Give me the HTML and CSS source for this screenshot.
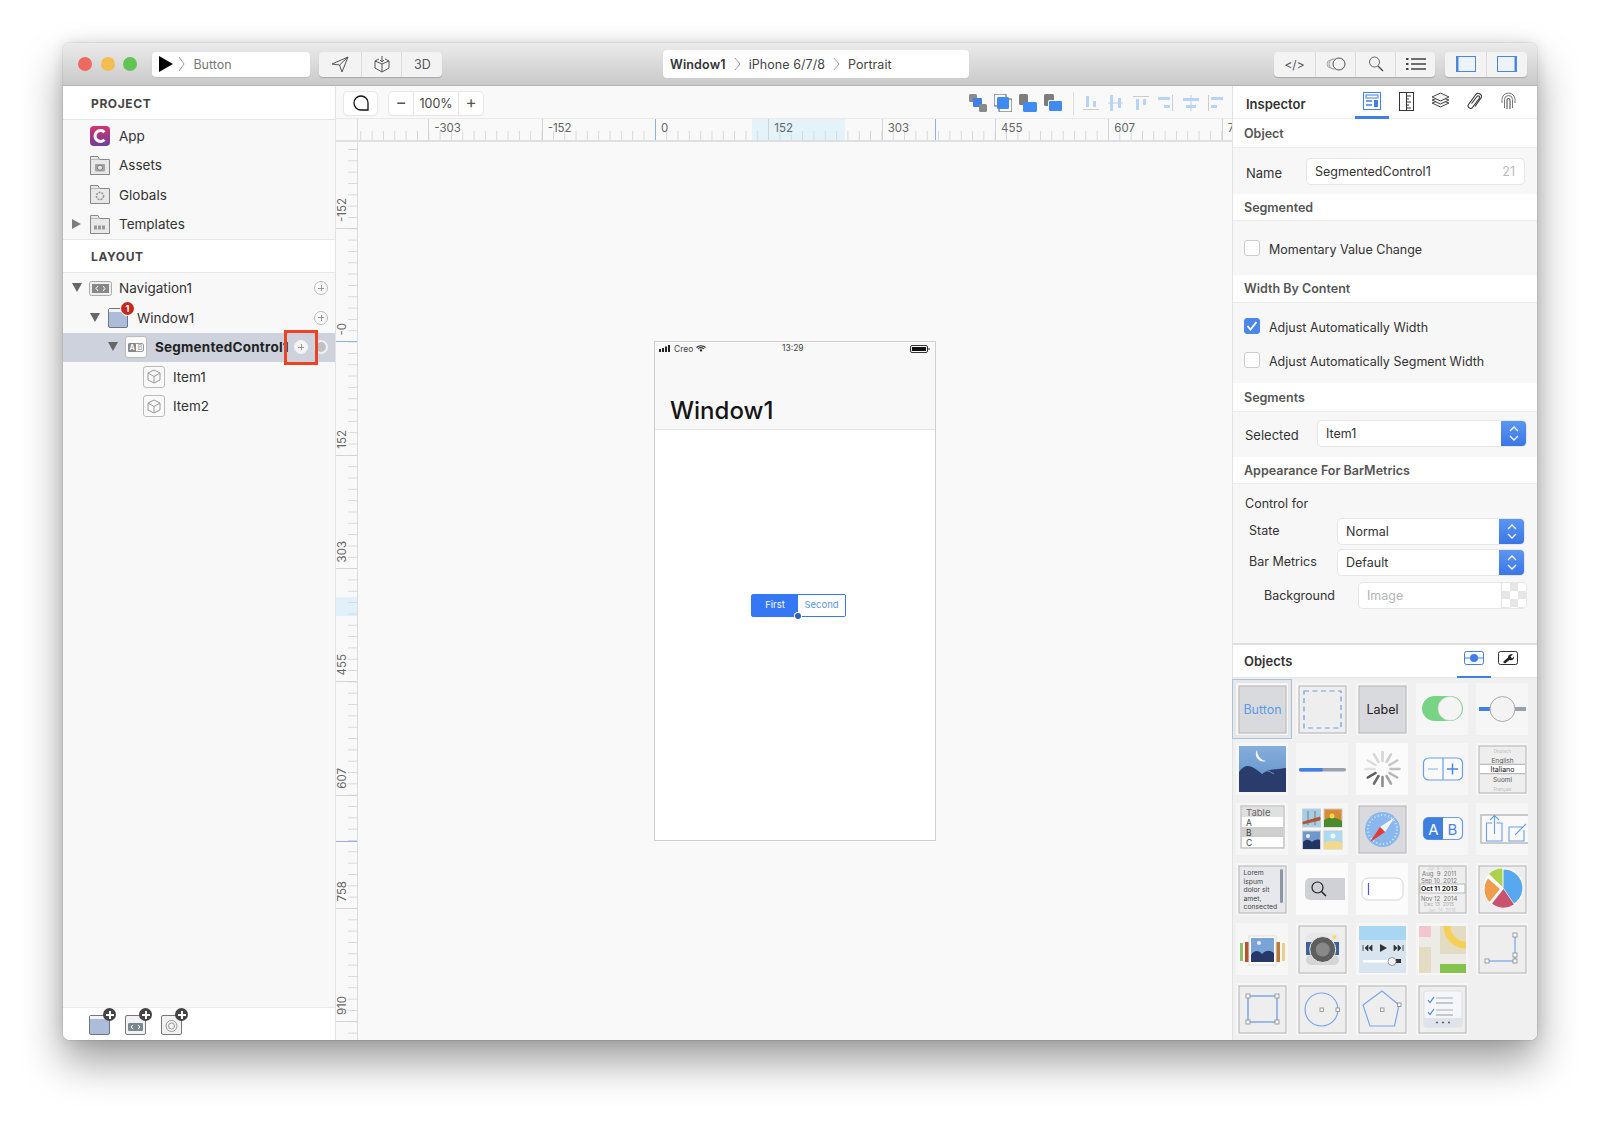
FILE: index.html
```html
<!DOCTYPE html>
<html lang="en">
<head>
<meta charset="utf-8">
<title>Creo</title>
<link rel="stylesheet" href="styles.css">
</head>
<body>
<div class="window">
  <header class="titlebar">
    <div class="tb-left">
      <div class="lights"><i class="light red"></i><i class="light yellow"></i><i class="light green"></i></div>
      <div class="scheme">
        <svg width="14" height="16" viewBox="0 0 14 16"><path d="M0 0L14 8L0 16Z" fill="#000"/></svg>
        <svg class="chev" width="7" height="16" viewBox="0 0 7 16"><path d="M1 1L6 8L1 15" fill="none" stroke="#999"/></svg>
        <span>Button</span>
      </div>
      <div class="btn-group send-group">
        <div class="seg w42"><svg width="18" height="17" viewBox="0 0 18 17"><path d="M1 8L17 1L11 16L8.5 9ZM8.5 9L17 1" fill="none" stroke="#555"/></svg></div>
        <div class="seg w40"><svg width="18" height="18" viewBox="0 0 18 18"><path d="M6 4L2 6L9 9L16 6L12 4M2 6V13L9 17L16 13V6M9 9V17M9 1V7M7 5L9 7L11 5" fill="none" stroke="#555"/></svg></div>
        <div class="seg w41 t3d">3D</div>
      </div>
    </div>
    <div class="crumbs">
      <b>Window1</b>
      <svg width="7" height="14" viewBox="0 0 7 14"><path d="M1 1L6 7L1 13" fill="none" stroke="#999"/></svg>
      <span>iPhone 6/7/8</span>
      <svg width="7" height="14" viewBox="0 0 7 14"><path d="M1 1L6 7L1 13" fill="none" stroke="#999"/></svg>
      <span>Portrait</span>
    </div>
    <div class="tb-right">
      <div class="btn-group">
        <div class="seg w41 code">&lt;/&gt;</div>
        <div class="seg w40"><svg width="20" height="14" viewBox="0 0 20 14"><circle cx="5" cy="7" r="4" fill="none" stroke="#aaa"/><circle cx="8" cy="7" r="5" fill="#eee" stroke="#999"/><circle cx="13" cy="7" r="6" fill="#f4f4f4" stroke="#555"/></svg></div>
        <div class="seg w40"><svg width="16" height="16" viewBox="0 0 16 16"><circle cx="6.5" cy="6" r="5" fill="none" stroke="#666"/><path d="M10 10L15 15" stroke="#444" stroke-width="1.2"/></svg></div>
        <div class="seg w40"><svg width="20" height="14" viewBox="0 0 20 14"><path d="M5 2H20M5 7H20M5 12H20" stroke="#444" stroke-width="1.4"/><path d="M0 2H2.5M0 7H2.5M0 12H2.5" stroke="#444" stroke-width="1.8"/></svg></div>
      </div>
      <div class="btn-group panels">
        <div class="seg w41"><svg width="20" height="16" viewBox="0 0 20 16"><rect x=".5" y=".5" width="19" height="15" fill="#eef2f9" stroke="#4a86e8"/><rect x="0" y="0" width="2.500" height="16" fill="#4a86e8"/></svg></div>
        <div class="seg w41"><svg width="20" height="16" viewBox="0 0 20 16"><rect x=".5" y=".5" width="19" height="15" fill="#eef2f9" stroke="#4a86e8"/><rect x="17.500" y="0" width="2.500" height="16" fill="#4a86e8"/></svg></div>
      </div>
    </div>
  </header>

  <div class="main">
    <aside class="sidebar">
      <div class="side-head">PROJECT</div>
      <div class="tree tree-project">
        <div class="row lvl0"><i class="tri-none"></i>
          <span class="ico"><svg width="20" height="20" viewBox="0 0 20 20"><defs><linearGradient id="app" x1="0" y1="0" x2="0" y2="1"><stop offset="0" stop-color="#d6336f"/><stop offset="1" stop-color="#6c3f9c"/></linearGradient></defs><rect width="20" height="20" rx="4" fill="url(#app)"/><path d="M14.5 6.2A5.5 5.5 0 1 0 14.5 13.8" fill="none" stroke="#fff" stroke-width="3"/></svg></span>
          <span class="name">App</span></div>
        <div class="row lvl0"><i class="tri-none"></i>
          <span class="ico"><svg width="20" height="19" viewBox="0 0 20 19"><path d="M.5 18.500V.5H8L9.500 3.500H19.500V18.500Z" fill="#e8e8e8" stroke="#888"/><path d="M1 3.500H9.500" stroke="#bbb"/><rect x="5" y="8" width="10" height="7.500" rx="1" fill="#a5a5a5"/><circle cx="10" cy="11.700" r="2.600" fill="#e6e6e6" stroke="#777"/></svg></span>
          <span class="name">Assets</span></div>
        <div class="row lvl0"><i class="tri-none"></i>
          <span class="ico"><svg width="20" height="19" viewBox="0 0 20 19"><path d="M.5 18.500V.5H8L9.500 3.500H19.500V18.500Z" fill="#e8e8e8" stroke="#888"/><path d="M1 3.500H9.500" stroke="#bbb"/><circle cx="10" cy="11" r="3.600" fill="none" stroke="#999" stroke-width="1.600" stroke-dasharray="2 1"/></svg></span>
          <span class="name">Globals</span></div>
        <div class="row lvl0"><i class="tri-right"></i>
          <span class="ico"><svg width="20" height="19" viewBox="0 0 20 19"><path d="M.5 18.500V.5H8L9.500 3.500H19.500V18.500Z" fill="#e8e8e8" stroke="#888"/><path d="M1 3.500H9.500" stroke="#bbb"/><path d="M4 12.500H16" stroke="#999" stroke-width="4" stroke-dasharray="3 1"/></svg></span>
          <span class="name">Templates</span></div>
      </div>
      <div class="side-head second">LAYOUT</div>
      <div class="tree tree-layout">
        <div class="row lvl0"><i class="tri-down"></i>
          <span class="ico"><svg width="23" height="15" viewBox="0 0 23 15"><rect x=".5" y=".5" width="22" height="14" rx="2" fill="#eee" stroke="#aaa"/><rect x="3" y="3" width="17" height="9" fill="#888"/><path d="M9 5L7 7.5L9 10M14 5L16 7.5L14 10" fill="none" stroke="#fff"/></svg></span>
          <span class="name">Navigation1</span><i class="plus"></i></div>
        <div class="row lvl1"><i class="tri-down"></i>
          <span class="ico win-ico"><svg width="20" height="20" viewBox="0 0 20 20"><rect x=".5" y=".5" width="19" height="19" rx="1.5" fill="#adbcd9" stroke="#6d7686"/><path d="M1 1H19V4H1Z" fill="#f4f4f4"/></svg><i class="badge">1</i></span>
          <span class="name">Window1</span><i class="plus"></i></div>
        <div class="row lvl2 selected"><i class="tri-down"></i>
          <span class="ico"><span class="tile"><svg width="16" height="9" viewBox="0 0 16 9"><rect x=".5" y=".5" width="15" height="8" rx="1.5" fill="#fff" stroke="#999"/><rect x="0" y="0" width="8" height="9" rx="1.5" fill="#888"/><text x="4" y="7.4" class="tile-a">A</text><text x="12" y="7.4" class="tile-b">B</text></svg></span></span>
          <span class="name strong">SegmentedControl1</span>
          <i class="plus filled"></i><i class="radio"></i>
          <i class="callout"></i></div>
        <div class="row lvl3"><i class="tri-none"></i>
          <span class="ico"><span class="tile"><svg width="14" height="15" viewBox="0 0 14 15"><path d="M7 1L13 4V11L7 14L1 11V4ZM1 4L7 7.5L13 4M7 7.5V14" fill="none" stroke="#999"/></svg></span></span>
          <span class="name">Item1</span></div>
        <div class="row lvl3"><i class="tri-none"></i>
          <span class="ico"><span class="tile"><svg width="14" height="15" viewBox="0 0 14 15"><path d="M7 1L13 4V11L7 14L1 11V4ZM1 4L7 7.5L13 4M7 7.5V14" fill="none" stroke="#999"/></svg></span></span>
          <span class="name">Item2</span></div>
      </div>
      <div class="side-foot">
        <span class="add"><svg width="21" height="20" viewBox="0 0 21 20"><rect x=".5" y=".5" width="20" height="19" rx="1.5" fill="#adbcd9" stroke="#6d7686"/><path d="M1 1H20V4H1Z" fill="#f4f4f4"/></svg><i class="addmark"></i></span>
        <span class="add"><svg width="21" height="20" viewBox="0 0 21 20"><rect x=".5" y=".5" width="20" height="19" rx="1.5" fill="#f2f2f2" stroke="#777"/><rect x="3" y="8" width="15" height="8" rx="1" fill="#7c8794"/><path d="M8 10L6 12L8 14M13 10L15 12L13 14" fill="none" stroke="#fff"/></svg><i class="addmark"></i></span>
        <span class="add"><svg width="21" height="20" viewBox="0 0 21 20"><rect x=".5" y=".5" width="20" height="19" rx="1.5" fill="#f2f2f2" stroke="#777"/><circle cx="10.500" cy="11" r="5.500" fill="none" stroke="#999"/><circle cx="10.500" cy="11" r="3" fill="none" stroke="#999"/></svg><i class="addmark"></i></span>
      </div>
    </aside>

    <section class="canvas">
      <div class="canvas-bar">
        <div class="tool single"><svg width="16" height="16" viewBox="0 0 16 16"><path d="M15 15H8A7 7 0 1 1 15 8Z" fill="none" stroke="#111" stroke-width="1.300"/></svg></div>
        <div class="zoom-group"><span class="z-btn">−</span><span class="z-val">100%</span><span class="z-btn">+</span></div>
        <div class="arrange">
          <svg width="18" height="18" viewBox="0 0 18 18"><rect x="0" y="0" width="8" height="8" rx="1.500" fill="#8a8a8a"/><rect x="4" y="4" width="9" height="9" rx="1" fill="#3f7fe8"/><rect x="10" y="10" width="8" height="8" rx="1.500" fill="#8a8a8a"/></svg>
          <svg width="18" height="18" viewBox="0 0 18 18"><rect x="0" y="0" width="12" height="12" rx="1.500" fill="none" stroke="#888" stroke-width="1.500"/><rect x="5" y="5" width="13" height="13" rx="1.500" fill="none" stroke="#888" stroke-width="1.500"/><rect x="3" y="3" width="12" height="12" rx="1.500" fill="#3f8bf0"/></svg>
          <svg width="18" height="18" viewBox="0 0 18 18"><rect x="0" y="0" width="9" height="11" rx="1.500" fill="#7d7d7d"/><rect x="4" y="8" width="14" height="10" rx="1.500" fill="#3f8bf0"/></svg>
          <svg width="18" height="18" viewBox="0 0 18 18"><rect x="0" y="0" width="10" height="12" rx="1.500" fill="#7d7d7d"/><rect x="4" y="6" width="14" height="12" rx="1.500" fill="#f9f9f9"/><rect x="5" y="7" width="13" height="10" rx="1" fill="#3f8bf0"/></svg>
          <i class="vsep"></i>
          <div class="aligns">
            <svg width="16" height="14" viewBox="0 0 16 14"><path d="M0 13.500H16" stroke="#ccc"/><rect x="3" y="0" width="3" height="11" fill="#b6d3fa"/><rect x="10" y="5" width="3" height="6" fill="#b6d3fa"/></svg>
            <svg width="15" height="16" viewBox="0 0 15 16"><path d="M0 8H15" stroke="#ccc"/><rect x="2" y="0" width="3" height="16" fill="#b6d3fa"/><rect x="10" y="3" width="3" height="10" fill="#b6d3fa"/></svg>
            <svg width="16" height="14" viewBox="0 0 16 14"><path d="M0 .500H16" stroke="#ccc"/><rect x="3" y="3" width="3" height="11" fill="#b6d3fa"/><rect x="10" y="3" width="3" height="6" fill="#b6d3fa"/></svg>
            <svg width="15" height="16" viewBox="0 0 15 16"><path d="M14.500 0V16" stroke="#ccc"/><rect x="0" y="2" width="12" height="3" fill="#b6d3fa"/><rect x="6" y="10" width="6" height="3" fill="#b6d3fa"/></svg>
            <svg width="16" height="16" viewBox="0 0 16 16"><path d="M8 0V16" stroke="#ccc"/><rect x="0" y="3" width="16" height="3" fill="#b6d3fa"/><rect x="3" y="10" width="10" height="3" fill="#b6d3fa"/></svg>
            <svg width="15" height="16" viewBox="0 0 15 16"><path d="M.500 0V16" stroke="#ccc"/><rect x="3" y="2" width="12" height="3" fill="#b6d3fa"/><rect x="3" y="10" width="6" height="3" fill="#b6d3fa"/></svg>
          </div>
        </div>
      </div>
      <div class="ruler-h">
        <div class="corner"></div>
        <div class="h-track">
          <i class="h-glow"></i><i class="h-edge"></i>
          <div class="h-mark lead"></div>
          <div class="h-mark">-303</div>
          <div class="h-mark">-152</div>
          <div class="h-mark blue">0</div>
          <div class="h-mark">152</div>
          <div class="h-mark">303</div>
          <div class="h-mark">455</div>
          <div class="h-mark">607</div>
          <div class="h-mark">758</div>
        </div>
      </div>
      <div class="canvas-body">
        <div class="ruler-v">
          <i class="v-glow"></i><i class="v-edge"></i>
          <div class="v-mark lead"><span>-152</span></div>
          <div class="v-mark blue"><span>-0</span></div>
          <div class="v-mark"><span>152</span></div>
          <div class="v-mark"><span>303</span></div>
          <div class="v-mark"><span>455</span></div>
          <div class="v-mark"><span>607</span></div>
          <div class="v-mark"><span>758</span></div>
          <div class="v-mark"><span>910</span></div>
        </div>
        <div class="stage">
          <div class="phone">
            <div class="nav">
              <div class="status">
                <svg width="12" height="7" viewBox="0 0 12 7"><path d="M0 4H2V7H0ZM3 3H5V7H3ZM6 1.500H8V7H6ZM9 0H11V7H9Z" fill="#222"/></svg>
                <span class="carrier">Creo</span>
                <svg width="10" height="7" viewBox="0 0 10 7"><path d="M.5 2.500A6.500 6.500 0 0 1 9.500 2.500M2 4A4 4 0 0 1 8 4" fill="none" stroke="#222" stroke-width="1.100"/><path d="M3.500 5L5 7L6.500 5A2 2 0 0 0 3.500 5Z" fill="#222"/></svg>
                <span class="clock">13:29</span>
                <svg class="batt" width="20" height="8" viewBox="0 0 20 8"><rect x=".5" y=".5" width="17" height="7" rx="1.500" fill="none" stroke="#333"/><rect x="2" y="2" width="14" height="4" fill="#111"/><rect x="18.500" y="3" width="1" height="2" fill="#333"/></svg>
              </div>
              <div class="nav-title">Window1</div>
            </div>
            <div class="segctl"><span class="sc-on">First</span><span class="sc-off">Second</span><i class="sc-dot"></i></div>
          </div>
        </div>
      </div>
    </section>

    <aside class="inspector">
      <div class="insp-head">
        <span class="insp-title">Inspector</span>
        <div class="insp-tabs">
          <span class="itab active"><svg width="18" height="18" viewBox="0 0 18 18"><rect x=".5" y=".5" width="17" height="17" fill="none" stroke="#3f7fe8"/><rect x="3" y="3" width="12" height="3" fill="none" stroke="#3f7fe8"/><path d="M3 9H9M3 13H9" stroke="#3f7fe8" stroke-width="1.500"/><rect x="11" y="8" width="4" height="7" fill="#3f7fe8"/></svg></span>
          <span class="itab"><svg width="15" height="19" viewBox="0 0 15 19"><rect x=".5" y=".5" width="14" height="18" fill="none" stroke="#333"/><path d="M7.500 1V18M8 4H12M8 7H10M8 10H12M8 13H10M8 16H12" stroke="#333"/></svg></span>
          <span class="itab"><svg width="19" height="16" viewBox="0 0 19 16"><path d="M9.500 8L18 11L9.500 15L1 11Z" fill="#f4f4f4" stroke="#444"/><path d="M9.500 5L18 8L9.500 12L1 8Z" fill="#f4f4f4" stroke="#444"/><path d="M9.500 1L18 5L9.500 9L1 5Z" fill="#f4f4f4" stroke="#444"/></svg></span>
          <span class="itab"><svg width="17" height="19" viewBox="0 0 17 19"><path d="M5.500 11.500L11 4.500C12.300 3 14.500 4.500 13.300 6.300L6.500 15.500C4.800 17.800 .8 15.300 2.500 12.500L9.800 2.500C12 -.3 17.200 2.700 15 6L9 14.500" fill="none" stroke="#333" stroke-width="1.100"/></svg></span>
          <span class="itab"><svg width="15" height="18" viewBox="0 0 15 18"><path d="M1 11V7.500A6.500 6.500 0 0 1 14 7.500V11M3.500 16V7.500A4 4 0 0 1 11.500 7.500V16" fill="none" stroke="#777"/><path d="M6 17V8A1.500 1.500 0 0 1 9 8V17" fill="none" stroke="#444"/></svg></span>
        </div>
      </div>
      <div class="sec-head first">Object</div>
      <div class="form-row name-row"><label class="lb-name">Name</label><div class="field name-field"><span>SegmentedControl1</span><em>21</em></div></div>
      <div class="sec-head">Segmented</div>
      <div class="check-row single"><i class="check"></i><span>Momentary Value Change</span></div>
      <div class="sec-head tall1">Width By Content</div>
      <div class="checks">
        <div class="check-row"><i class="check on"><svg width="12" height="10" viewBox="0 0 12 10"><path d="M1.500 5L4.500 8.500L10.500 1" fill="none" stroke="#fff" stroke-width="1.800"/></svg></i><span>Adjust Automatically Width</span></div>
        <div class="check-row"><i class="check"></i><span>Adjust Automatically Segment Width</span></div>
      </div>
      <div class="sec-head tall2">Segments</div>
      <div class="form-row selected-row"><label class="lb-selected">Selected</label>
        <div class="field select sel-wide"><span>Item1</span><i class="updown"><svg width="10" height="15" viewBox="0 0 10 15"><path d="M1 5L5 1L9 5M1 10L5 14L9 10" fill="none" stroke="#fff" stroke-width="1.300"/></svg></i></div></div>
      <div class="sec-head">Appearance For BarMetrics</div>
      <div class="appearance">
        <div class="ctl-for">Control for</div>
        <div class="form-row tight"><label class="lb-state">State</label>
          <div class="field select sel-mid"><span>Normal</span><i class="updown"><svg width="10" height="15" viewBox="0 0 10 15"><path d="M1 5L5 1L9 5M1 10L5 14L9 10" fill="none" stroke="#fff" stroke-width="1.300"/></svg></i></div></div>
        <div class="form-row tight second-sel"><label class="lb-state">Bar Metrics</label>
          <div class="field select sel-mid"><span>Default</span><i class="updown"><svg width="10" height="15" viewBox="0 0 10 15"><path d="M1 5L5 1L9 5M1 10L5 14L9 10" fill="none" stroke="#fff" stroke-width="1.300"/></svg></i></div></div>
        <div class="form-row tight bg-row"><label class="lb-bg">Background</label>
          <div class="field select sel-img"><span class="ph">Image</span><i class="checker"></i></div></div>
      </div>
      <div class="obj-head">
        <span class="insp-title">Objects</span>
        <div class="obj-tabs">
          <span class="otab active"><svg width="20" height="14" viewBox="0 0 20 14"><rect x=".5" y=".5" width="19" height="13" rx="2" fill="none" stroke="#3f7fe8"/><path d="M1 7H19" stroke="#3f7fe8"/><circle cx="10" cy="7" r="4" fill="#3f7fe8"/></svg></span>
          <span class="otab"><svg width="20" height="14" viewBox="0 0 20 14"><rect x=".5" y=".5" width="19" height="13" rx="2" fill="none" stroke="#333"/><path d="M5 11L10 6.500C10 3.500 12.500 2.500 15 3.500L12.500 5.500L14 7.500L16 5.500C16.500 8 14 10 11.500 9L7 12.500Z" fill="#222"/></svg></span>
        </div>
      </div>
      <div class="objects">
        <div class="obj sel"><svg viewBox="0 0 52 52"><rect class="fr grad" x="3" y="3" width="47" height="47"/><text class="t-btn" x="26.500" y="31">Button</text></svg></div>
        <div class="obj"><svg viewBox="0 0 52 52"><rect class="fr" x="3" y="3" width="47" height="47"/><rect x="8" y="8" width="37" height="37" fill="none" stroke="#6a9fe8" stroke-width="1.200" stroke-dasharray="5 3.500"/></svg></div>
        <div class="obj"><svg viewBox="0 0 52 52"><rect class="fr grad" x="3" y="3" width="47" height="47"/><text class="t-lab" x="26.500" y="31">Label</text></svg></div>
        <div class="obj"><svg viewBox="0 0 52 52"><rect x="6" y="13" width="41" height="25" rx="12.500" fill="#77d485"/><circle cx="34" cy="25.500" r="12" fill="#f4f4f4" stroke="#ccc" stroke-width=".5"/></svg></div>
        <div class="obj"><svg viewBox="0 0 52 52"><rect x="3" y="24" width="12" height="4" fill="#3f7fe8"/><rect x="38" y="24" width="12" height="4" fill="#98a2ae"/><circle cx="26.500" cy="26" r="12.500" fill="#f3f3f3" stroke="#aaa"/></svg></div>

        <div class="obj"><svg viewBox="0 0 52 52"><defs><linearGradient id="sky" x1="0" y1="0" x2="0" y2="1"><stop offset="0" stop-color="#86aedb"/><stop offset="1" stop-color="#5a8cc6"/></linearGradient></defs><rect x="3" y="3" width="47" height="46" fill="url(#sky)"/><path d="M21 7A7.500 7.500 0 0 0 30 18A11 11 0 0 1 21 7Z" fill="#f3f3f3"/><path d="M3 29C10 18 18 24 26 31C32 26 36 27 50 25V49H3Z" fill="#2a3c6b"/><path d="M26 31C30 26 33 28 38 31" fill="none" stroke="#6c90c4"/></svg></div>
        <div class="obj"><svg viewBox="0 0 52 52"><rect x="3" y="25" width="47" height="3.500" rx="1.700" fill="#98a2ae"/><rect x="3" y="25" width="24" height="3.500" rx="1.700" fill="#3f7fe8"/></svg></div>
        <div class="obj plain"><svg viewBox="0 0 52 52"><g stroke-width="2.600" stroke-linecap="round"><path d="M26.500 9V18" stroke="#d4d4d4"/><path d="M35 11.300L30.500 19" stroke="#cfcfcf"/><path d="M41.200 17.500L33.500 22" stroke="#c8c8c8"/><path d="M43.500 26H34.500" stroke="#c0c0c0"/><path d="M41.200 34.500L33.500 30" stroke="#b5b5b5"/><path d="M35 40.700L30.500 33" stroke="#a5a5a5"/><path d="M26.500 43V34" stroke="#8c8c8c"/><path d="M18 40.700L22.500 33" stroke="#6c6c6c"/><path d="M11.800 34.500L19.500 30" stroke="#5a5a5a"/><path d="M9.500 26H18.500" stroke="#e0e0e0"/><path d="M11.800 17.500L19.500 22" stroke="#dcdcdc"/><path d="M18 11.300L22.500 19" stroke="#d8d8d8"/></g></svg></div>
        <div class="obj"><svg viewBox="0 0 52 52"><rect x="7.500" y="15" width="39" height="22" rx="5" fill="#fafafa" stroke="#6a9fe8" stroke-width="1.200"/><path d="M27 15V37" stroke="#6a9fe8" stroke-width="1.200"/><path d="M12 26H22" stroke="#a9c7f0" stroke-width="1.500"/><path d="M31 26H42M36.500 20.500V31.500" stroke="#4a86e8" stroke-width="1.500"/></svg></div>
        <div class="obj"><svg viewBox="0 0 52 52"><rect class="fr" x="3" y="3" width="47" height="47"/><text class="t-pick f5" x="26.500" y="9.500">Deutsch</text><text class="t-pick f7" x="26.500" y="19.500">English</text><path d="M4 21.500H49M4 30.500H49" stroke="#bbb" stroke-width="1.500"/><rect x="4" y="22" width="45" height="8" fill="#fff"/><text class="t-pick f8" x="26.500" y="29">Italiano</text><text class="t-pick f7" x="26.500" y="39">Suomi</text><text class="t-pick f5" x="26.500" y="47.500">Français</text></svg></div>

        <div class="obj"><svg viewBox="0 0 52 52"><rect class="fr" x="5" y="3" width="43" height="42"/><rect x="6" y="4" width="41" height="10" fill="#e0e0e0"/><rect x="6" y="14" width="41" height="10" fill="#fff"/><rect x="6" y="24" width="41" height="10" fill="#cfcfcf"/><rect x="6" y="34" width="41" height="10" fill="#fff"/><text class="t-tab big" x="10" y="13">Table</text><text class="t-tab" x="10" y="23">A</text><text class="t-tab" x="10" y="33">B</text><text class="t-tab" x="10" y="43">C</text></svg></div>
        <div class="obj"><svg viewBox="0 0 52 52"><rect x="6.500" y="6" width="18" height="18" fill="#9cd0ee" stroke="#ccc"/><path d="M12 8V22M19 8V22M7 19L24 14V17L7 21Z" stroke="#b3532c" fill="#b3532c" stroke-width=".8"/><rect x="28" y="6" width="18" height="18" fill="#d98a34" stroke="#ccc"/><path d="M28 17C34 13 40 14 46 18V24H28Z" fill="#4c8a2e"/><circle cx="36" cy="13" r="2.500" fill="#f5d64c"/><rect x="6.500" y="28" width="18" height="18" fill="#6e97cc" stroke="#ccc"/><path d="M7 39C11 35 14 37 16 39C18 37 21 36 24 37V46H7Z" fill="#223562"/><circle cx="12" cy="33" r="2" fill="#f1f1f1"/><rect x="28" y="28" width="18" height="18" fill="#a9dbf2" stroke="#ccc"/><circle cx="37" cy="33" r="2.500" fill="#fff"/><path d="M28 40C34 37 40 37 46 40V46H28Z" fill="#f3d98e"/></svg></div>
        <div class="obj"><svg viewBox="0 0 52 52"><rect class="fr grad" x="3" y="3" width="47" height="47"/><circle cx="26.500" cy="26.500" r="17.500" fill="#8ab7ee"/><circle cx="26.500" cy="26.500" r="14.500" fill="none" stroke="#d7e6fa" stroke-width="2" stroke-dasharray="1 2.500"/><path d="M39 14L24 24L29 29Z" fill="#f4f4f4"/><path d="M14 39L24 24L29 29Z" fill="#e8392f"/></svg></div>
        <div class="obj"><svg viewBox="0 0 52 52"><rect x="7.500" y="14.500" width="39" height="22" rx="5" fill="#fafafa" stroke="#6a9fe8" stroke-width="1.200"/><path d="M12.500 14.500H27V36.500H12.500A5 5 0 0 1 7.500 31.500V19.500A5 5 0 0 1 12.500 14.500Z" fill="#3f7fe0"/><text class="t-ab w" x="17.500" y="31.500">A</text><text class="t-ab b" x="36.500" y="31.500">B</text></svg></div>
        <div class="obj clip"><svg viewBox="0 0 52 52"><rect x="5" y="12" width="50" height="28" fill="#f9f9f9" stroke="#bbb" stroke-width="1.500"/><path d="M16 20H10.500V38H26V20H20.500M18.500 31V13M14 17L18.500 12.500L23 17" fill="none" stroke="#6a9fe8" stroke-width="1.100"/><path d="M47 24H33V38H48V27M39 32L50 21" fill="none" stroke="#6a9fe8" stroke-width="1.100"/></svg></div>

        <div class="obj"><svg viewBox="0 0 52 52"><rect class="fr grad2" x="3" y="3" width="47" height="47"/><text class="t-lorem" x="7.500" y="12">Lorem</text><text class="t-lorem" x="7.500" y="20.500">ispum</text><text class="t-lorem" x="7.500" y="29">dolor sit</text><text class="t-lorem" x="7.500" y="37.500">amet,</text><text class="t-lorem" x="7.500" y="46">consected</text><rect x="44" y="6" width="3" height="34" rx="1.500" fill="#8d97a3"/></svg></div>
        <div class="obj plain"><svg viewBox="0 0 52 52"><path d="M14 15H49V37H14A5 5 0 0 1 9 32V20A5 5 0 0 1 14 15Z" fill="#cfd1d6"/><circle cx="21.500" cy="24.500" r="5.500" fill="none" stroke="#222" stroke-width="1.200"/><path d="M25.500 28.500L30 33" stroke="#222" stroke-width="1.500"/></svg></div>
        <div class="obj plain"><svg viewBox="0 0 52 52"><rect x="6" y="15" width="41" height="22" rx="6" fill="#fff" stroke="#d5d5d5"/><path d="M12.500 20V32" stroke="#3f5fd8" stroke-width="1.200"/></svg></div>
        <div class="obj"><svg viewBox="0 0 52 52"><rect class="fr" x="3" y="3" width="47" height="47"/><text class="t-date d5" x="12" y="7">Jul  8  2010</text><text class="t-date" x="6" y="13">Aug  9  2011</text><text class="t-date" x="5" y="19.500">Sep 10  2012</text><rect x="4" y="21" width="45" height="9" fill="#fbfbfb" stroke="#aaa" stroke-width=".8"/><text class="t-date hi" x="5" y="28.300">Oct 11 2013</text><text class="t-date" x="5" y="37.500">Nov 12  2014</text><text class="t-date d6" x="8" y="43">Dec 13  2015</text><text class="t-date d5" x="12" y="48.500">Jan  14  2016</text></svg></div>
        <div class="obj"><svg viewBox="0 0 52 52"><rect class="fr" x="3" y="3" width="47" height="47"/><circle cx="27.500" cy="25" r="20" fill="#fff"/><path d="M27.500 25V6.500A18.500 18.500 0 0 1 38 40.500Z" fill="#58a8f0"/><path d="M27.500 25L38 40.500A18.500 18.500 0 0 1 16 39.500Z" fill="#c9526f" transform="translate(0 1)"/><path d="M24 26L13.500 39A18.500 18.500 0 0 1 12 15.500Z" fill="#ef9c4d"/><path d="M27.500 25L14 12A18.500 18.500 0 0 1 27.500 6.500Z" fill="#aed24c" transform="translate(-1 -1)"/></svg></div>

        <div class="obj"><svg viewBox="0 0 52 52"><rect x="4" y="20" width="3" height="18" fill="#8fbf6a"/><rect x="7" y="17" width="6" height="25" fill="#f7f7f7"/><rect x="9" y="19" width="4" height="20" fill="#b7532e"/><rect x="46" y="20" width="3" height="18" fill="#e9d08f"/><rect x="40" y="17" width="6" height="25" fill="#f7f7f7"/><rect x="40" y="19" width="4" height="20" fill="#b97a3a"/><rect x="13" y="13" width="27" height="29" fill="#fff" stroke="#ddd"/><rect x="15" y="15" width="23" height="24" fill="#7aa4d8"/><path d="M15 32C19 26 23 28 26 31C30 27 34 27 38 30V39H15Z" fill="#26396a"/><circle cx="23" cy="20" r="2" fill="#eee"/></svg></div>
        <div class="obj"><svg viewBox="0 0 52 52"><rect class="fr" x="3" y="3" width="47" height="47"/><rect x="10" y="10" width="33" height="32" rx="6" fill="#e8e8e8"/><path d="M10 19H43V32H10Z" fill="#3e5f9a"/><rect x="10" y="32" width="33" height="10" rx="5" fill="#d5d5d5"/><circle cx="26.700" cy="26.500" r="13" fill="#5e5e5e" stroke="#f0f0f0"/><circle cx="26.700" cy="26.500" r="7" fill="#888"/><circle cx="38.500" cy="14" r="1.800" fill="#f7dd4c"/></svg></div>
        <div class="obj"><svg viewBox="0 0 52 52"><rect x="3" y="3" width="47" height="47" fill="#d8e5f1"/><rect x="3" y="3" width="47" height="14" fill="#a9d6f2"/><path d="M7 22V28M9 25L12 22V28ZM13 25L16 22V28Z" fill="#333" stroke="#333" stroke-width=".8"/><path d="M24 21V29L31 25Z" fill="#333"/><path d="M47 22V28M45 25L42 22V28ZM41 25L38 22V28Z" fill="#333" stroke="#333" stroke-width=".8"/><rect x="7" y="37" width="38" height="2.500" fill="#fff"/><rect x="38" y="36" width="7" height="4" fill="#333"/><circle cx="36" cy="38.500" r="4" fill="#f2f2f2" stroke="#999"/></svg></div>
        <div class="obj"><svg viewBox="0 0 52 52"><rect x="3" y="3" width="47" height="47" fill="#ecebe6"/><rect x="3" y="3" width="12" height="11" fill="#f3c5cd"/><rect x="3" y="24" width="12" height="26" fill="#e4dcc2"/><rect x="24" y="3" width="26" height="28" fill="#e4dcc2"/><path d="M31 3A19 19 0 0 0 50 22" fill="none" stroke="#f6cf56" stroke-width="7"/><rect x="24" y="41" width="26" height="9" fill="#84c24d"/></svg></div>
        <div class="obj"><svg viewBox="0 0 52 52"><rect class="fr" x="3" y="3" width="47" height="47"/><path d="M39 12V38H11" fill="none" stroke="#8fb3ec" stroke-width="1.500"/><rect class="hd" x="37" y="10" width="4" height="4"/><rect class="hd" x="37" y="30" width="4" height="4"/><rect class="hd" x="37" y="36" width="4" height="4"/><rect class="hd" x="9" y="36" width="4" height="4"/></svg></div>

        <div class="obj"><svg viewBox="0 0 52 52"><rect class="fr" x="3" y="3" width="47" height="47"/><rect x="12" y="13" width="29" height="26" fill="none" stroke="#7ca7ea" stroke-width="1.500"/><rect class="hd" x="10" y="11" width="4" height="4"/><rect class="hd" x="39" y="11" width="4" height="4"/><rect class="hd" x="10" y="37" width="4" height="4"/><rect class="hd" x="39" y="37" width="4" height="4"/></svg></div>
        <div class="obj"><svg viewBox="0 0 52 52"><rect class="fr" x="3" y="3" width="47" height="47"/><circle cx="25.500" cy="26.500" r="16.500" fill="none" stroke="#7ca7ea" stroke-width="1.200"/><rect class="hd" x="24" y="25" width="3.500" height="3.500"/><rect class="hd" x="40" y="25" width="3.500" height="3.500"/></svg></div>
        <div class="obj"><svg viewBox="0 0 52 52"><rect class="fr" x="3" y="3" width="47" height="47"/><path d="M26 8L43 22L38.500 43H14L7 22Z" fill="none" stroke="#7ca7ea" stroke-width="1.200"/><rect class="hd" x="24.500" y="25" width="3.500" height="3.500"/><rect class="hd" x="41.500" y="20" width="3.500" height="3.500"/></svg></div>
        <div class="obj"><svg viewBox="0 0 52 52"><rect class="fr" x="3" y="3" width="47" height="47"/><rect x="8" y="8" width="38" height="36" rx="2" fill="#f5f6fa" stroke="#ccc" stroke-width=".5"/><rect x="8" y="35" width="38" height="9" fill="#dfe3ea"/><path d="M12 17L14 19.500L18 14M12 29L14 31.500L18 26" fill="none" stroke="#3f7fe8" stroke-width="1.200"/><path d="M20 15H37M20 27H37" stroke="#aab0ba"/><path d="M20 20H37M20 32H37" stroke="#8f99a8" stroke-width="1.200"/><circle cx="21" cy="39.500" r="1.100" fill="#667"/><circle cx="27" cy="39.500" r="1.100" fill="#667"/><circle cx="33" cy="39.500" r="1.100" fill="#667"/></svg></div>
      </div>
    </aside>
  </div>
</div>
</body>
</html>
```

FILE: styles.css
```css
* { box-sizing: border-box; }
html, body { margin: 0; height: 1124px; overflow: hidden; background: #fff; }
body { font-family: Inter, "Liberation Sans", sans-serif; font-size: 13px; color: #333; }
i { display: block; font-style: normal; }

.window {
  margin: 43px 0 0 63px; width: 1474px; height: 997px;
  border-radius: 7px; overflow: visible; display: flex; flex-direction: column;
  box-shadow: 0 22px 42px rgba(0,0,0,.38), 0 0 14px rgba(0,0,0,.12), 0 0 0 1px rgba(0,0,0,.06);
  background: #f8f8f8;
}

/* title bar */
.titlebar {
  height: 43px; flex: none; display: flex; align-items: center;
  border-radius: 7px 7px 0 0; border-bottom: 1px solid #b4b4b4;
  background: linear-gradient(#ebebeb, #c9c9c9);
}
.tb-left { flex: 0 0 600px; display: flex; align-items: center; padding-left: 15px; }
.lights { display: flex; gap: 8.700px; }
.light { width: 14px; height: 14px; border-radius: 50%; }
.red { background: #ee6a5e; } .yellow { background: #f5bd4f; } .green { background: #61c454; }
.scheme {
  margin-left: 15px; width: 158px; height: 25px; background: #fff; border-radius: 4px;
  display: flex; align-items: center; padding-left: 7px; color: #777; font-size: 12.500px;
  box-shadow: 0 1px 1px rgba(0,0,0,.08);
}
.scheme .chev { margin: 0 8px 0 5px; }
.btn-group {
  display: flex; height: 25px; border-radius: 4px; background: #f3f3f3;
  box-shadow: 0 1px 1px rgba(0,0,0,.18);
}
.send-group { margin-left: 9px; }
.seg { display: flex; align-items: center; justify-content: center; border-left: 1px solid #d9d9d9; color: #555; }
.seg:first-child { border-left: 0; }
.w40 { width: 40px; } .w41 { width: 41px; } .w42 { width: 42px; }
.t3d { font-size: 12.500px; }
.code { font-size: 12px; }
.crumbs {
  flex: 0 0 306px; height: 28px; background: #fff; border-radius: 4px;
  display: flex; align-items: center; padding-left: 7px; gap: 8px; font-size: 12.500px; color: #444; letter-spacing: .05px;
}
.crumbs b { font-weight: 600; color: #333; letter-spacing: .15px; }
.tb-right { flex: 1; display: flex; justify-content: flex-end; padding-right: 10px; }
.panels { margin-left: 10px; }

/* layout */
.main { flex: 1; min-height: 0; display: flex; }
.sidebar {
  flex: 0 0 273px; display: flex; flex-direction: column; background: #f8f8f8;
  border-right: 1px solid #e2e2e2; border-radius: 0 0 0 7px;
}
.side-head {
  height: 34px; flex: none; background: #fff; border-bottom: 1px solid #e6e6e6;
  padding: 1px 0 0 28px; display: flex; align-items: center;
  font-size: 12px; font-weight: 700; color: #444; letter-spacing: .6px;
}
.side-head.second { border-top: 1px solid #e6e6e6; }
.tree { flex: none; }
.tree-project { padding-top: 1px; }
.tree-layout { flex: 1; padding-top: .5px; }
.row { height: 29.500px; display: flex; align-items: center; position: relative; }
.lvl0 { padding-left: 9px; } .lvl1 { padding-left: 27px; } .lvl2 { padding-left: 45px; } .lvl3 { padding-left: 63px; }
.row.selected { background: #cdd2dc; }
.tri-none, .tri-right, .tri-down { flex: 0 0 10px; margin-right: 6px; height: 10px; }
.tri-right { width: 0; border-left: 9px solid #7d7d7d; border-top: 5px solid transparent; border-bottom: 5px solid transparent; box-sizing: border-box; flex: 0 0 10px; }
.tri-down { width: 0; border-top: 9px solid #666; border-left: 5px solid transparent; border-right: 5px solid transparent; }
.ico { flex: 0 0 24px; display: flex; align-items: center; justify-content: center; position: relative; }
.ico svg { display: block; }
.win-ico { justify-content: flex-start; padding-left: 2px; }
.tile {
  width: 22px; height: 22px; border: 1px solid #bbb; border-radius: 3px; background: #fafafa;
  display: flex; align-items: center; justify-content: center;
}
.tile-a { font-size: 7px; fill: #fff; font-weight: 700; text-anchor: middle; }
.tile-b { font-size: 7px; fill: #888; text-anchor: middle; }
.name { margin-left: 7px; font-size: 13.500px; color: #333; white-space: nowrap; }
.strong { font-weight: 700; color: #222; letter-spacing: .22px; }
.plus {
  margin-left: auto; margin-right: 7px; width: 14px; height: 14px; border-radius: 50%;
  border: 1px solid #bbb; background: #fafafa; position: relative; flex: none;
}
.plus::before, .plus::after { content: ""; position: absolute; background: #999; }
.plus::before { left: 3px; right: 3px; top: 5.500px; height: 1px; }
.plus::after { top: 3px; bottom: 3px; left: 5.500px; width: 1px; }
.plus.filled { position: absolute; right: 27px; margin: 0; background: #f4f4f4; border-color: #f4f4f4; z-index: 2; }
.radio { position: absolute; right: 7px; width: 14px; height: 14px; border-radius: 50%; background: #bfc1c5; border: 2px solid #f0f0f0; }
.callout { position: absolute; left: 221px; top: -3px; width: 34px; height: 35px; border: 3px solid #ee4323; z-index: 1; }
.badge {
  position: absolute; left: 15px; top: -6px; width: 13px; height: 13px; border-radius: 50%;
  background: #c5281c; color: #fff; font-size: 9px; font-weight: 700; line-height: 13px; text-align: center;
  box-shadow: 0 0 0 1px #f8f8f8;
}
.side-foot {
  height: 33px; flex: none; background: #fff; border-top: 1px solid #eaeaea; border-radius: 0 0 0 7px;
  display: flex; padding: 7px 0 0 26px; gap: 15px;
}
.add { position: relative; width: 21px; height: 20px; }
.add svg { display: block; }
.addmark { position: absolute; right: -6px; top: -7px; width: 13px; height: 13px; border-radius: 50%; background: #444; }
.addmark::before, .addmark::after { content: ""; position: absolute; background: #fff; }
.addmark::before { left: 2.500px; right: 2.500px; top: 5.500px; height: 2px; }
.addmark::after { top: 2.500px; bottom: 2.500px; left: 5.500px; width: 2px; }

/* canvas */
.canvas { flex: 1; min-width: 0; display: flex; flex-direction: column; background: #f9f9f9; }
.canvas-bar {
  height: 33px; flex: none; display: flex; align-items: center; padding: 2px 0 0 8px; border-bottom: 1px solid #eaeaea;
}
.tool.single {
  width: 33px; height: 23px; background: #fff; border-radius: 4px; display: flex; align-items: center; justify-content: center;
  box-shadow: 0 0 0 1px #e8e8e8, 0 1px 1px rgba(0,0,0,.1);
}
.zoom-group {
  margin-left: 12px; width: 94px; height: 23px; background: #fff; border-radius: 4px; display: flex; color: #444;
  box-shadow: 0 0 0 1px #e8e8e8, 0 1px 1px rgba(0,0,0,.1); font-size: 12.500px; line-height: 23px; text-align: center;
}
.z-btn { flex: 0 0 24px; font-size: 17px; line-height: 21px; color: #555; }
.z-val { flex: 1; border-left: 1px solid #e6e6e6; border-right: 1px solid #e6e6e6; }
.arrange { margin-left: auto; padding-right: 9px; display: flex; align-items: center; gap: 7px; }
.arrange svg { display: block; }
.aligns { display: flex; align-items: center; gap: 9.500px; }
.vsep { width: 1px; height: 23px; background: #dcdcdc; margin: 0 2px 0 4px; }

.ruler-h { height: 23px; flex: none; display: flex; border-bottom: 2px solid #e0e0e0; overflow: hidden; }
.corner { flex: 0 0 22px; border-right: 1px solid #dcdcdc; }
.h-track {
  flex: 1; display: flex; position: relative; min-width: 0;
  background: linear-gradient(90deg, #d8d8d8 1px, transparent 1px) 2.330px 100% / 11.333px 9px repeat-x;
}
.h-mark {
  flex: 0 0 113.333px; border-left: 1px solid #d4d4d4; padding-left: 5px;
  font-size: 11.500px; line-height: 18px; color: #666; position: relative; white-space: nowrap;
}
.h-mark.lead { flex-basis: 70.330px; border-left: 0; }
.h-mark.blue { border-left-color: #8fb0ea; }
.h-glow { position: absolute; left: 394px; top: 0; bottom: 0; width: 93px; background: rgba(190,228,250,.35); }
.h-edge { position: absolute; left: 577px; top: 0; bottom: 0; width: 1px; background: #8fb0ea; }

.canvas-body { flex: 1; min-height: 0; display: flex; }
.ruler-v {
  flex: 0 0 22px; border-right: 1px solid #dcdcdc; position: relative; overflow: hidden;
  background: linear-gradient(#d8d8d8 1px, transparent 1px) 100% 7px / 9px 11.333px repeat-y;
}
.v-mark {
  height: 113.333px; border-bottom: 1px solid #d4d4d4; position: relative;
  display: flex; align-items: flex-end; font-size: 11.500px; color: #666;
}
.v-mark.lead { height: 87px; }
.v-mark.blue { border-bottom-color: #8fb0ea; }
.v-mark span { writing-mode: vertical-rl; transform: rotate(180deg); padding-top: 6px; width: 16px; line-height: 13px; padding-right: 0; }
.v-glow { position: absolute; left: 0; right: 0; top: 455px; height: 19px; background: rgba(190,228,250,.4); }
.v-edge { position: absolute; left: 0; right: 0; top: 699px; height: 1px; background: #8fb0ea; }
.stage { flex: 1; position: relative; overflow: hidden; }
.phone { position: absolute; left: 296px; top: 199px; width: 282px; height: 500px; background: #fff; border: 1px solid #cfcfcf; }
.nav { height: 88px; background: #f8f8f8; border-bottom: 1px solid #e6e6e6; }
.status { height: 12px; padding: 1px 5px 0 4px; display: flex; align-items: center; gap: 3px; font-size: 8.500px; color: #444; position: relative; }
.clock { position: absolute; left: 127px; top: 1px; line-height: 11px; }
.batt { margin-left: auto; }
.nav-title { margin: 42px 0 0 15px; font-size: 24px; font-weight: 500; color: #151515; line-height: 30px; }
.segctl {
  position: absolute; left: 96px; top: 252px; width: 95px; height: 23px; display: flex;
  border: 1px solid #3478f6; border-radius: 2px; font-size: 9.500px; line-height: 20px; text-align: center;
}
.sc-on { flex: 0 0 46px; background: #3478f6; color: #fff; }
.sc-off { flex: 1; color: #5a92f5; background: #fff; }
.sc-dot { position: absolute; left: 43px; bottom: -3px; width: 6px; height: 6px; border-radius: 50%; background: #2d5fc4; box-shadow: 0 0 0 1px #fff; }

/* inspector */
.inspector {
  flex: 0 0 305px; display: flex; flex-direction: column; background: #f7f7f7;
  border-left: 1px solid #e2e2e2; border-radius: 0 0 7px 0;
}
.insp-head { height: 33px; flex: none; background: #fff; display: flex; align-items: center; padding: 3px 0 0 13px; border-bottom: 1px solid #eee; position: relative; }
.insp-title { font-size: 13px; font-weight: 600; color: #333; }
.insp-tabs { position: absolute; left: 122px; top: 0; display: flex; }
.itab { width: 34px; height: 33px; display: flex; align-items: flex-start; justify-content: center; padding-top: 6px; }
.itab.active { border-bottom: 3px solid #3f7fe8; }
.sec-head {
  height: 27px; flex: none; background: #fff; border-bottom: 1px solid #ececec; padding-left: 11px;
  display: flex; align-items: center; font-size: 12.500px; font-weight: 600; color: #555;
}
.sec-head.first { height: 29px; }
.sec-head.tall1 { height: 28px; }
.sec-head.tall2 { height: 29px; }
.form-row { display: flex; align-items: center; }
.name-row { height: 46px; padding-left: 13px; }
.lb-name { flex: 0 0 61px; padding-top: 3px; }
.selected-row { height: 45px; padding-left: 12px; align-items: flex-start; padding-top: 9px; }
.lb-selected { flex: 0 0 73px; padding-top: 6px; }
.field {
  height: 25px; background: #fff; border-radius: 4px; box-shadow: 0 0 0 1px #e6e6e6; display: flex; align-items: center; padding-left: 8px;
  font-size: 12.500px; color: #333;
}
.name-field { width: 217px; justify-content: space-between; padding-right: 9px; }
.name-field em { font-style: normal; color: #bbb; }
.select { padding-right: 0; justify-content: space-between; }
.sel-wide { width: 208px; }
.sel-mid { width: 186px; }
.sel-img { width: 167px; }
.updown {
  width: 25px; height: 25px; border-radius: 0 4px 4px 0; background: linear-gradient(#5b96f2, #3a76e6);
  display: flex; align-items: center; justify-content: center;
}
.checker {
  width: 25px; height: 25px; border-radius: 0 4px 4px 0; border-left: 1px solid #e2e2e2;
  background: conic-gradient(#e6e6e6 25%, #fff 0 50%, #e6e6e6 0 75%, #fff 0) 0 0 / 16px 16px;
}
.ph { color: #b5b5b5; }
.check-row { height: 34px; display: flex; align-items: center; padding-left: 11px; gap: 9px; font-size: 12.500px; }
.check-row span { padding-top: 2px; }
.check-row.single { height: 54px; }
.checks { padding: 6px 0; }
.check { width: 16px; height: 16px; border-radius: 3px; background: #fff; border: 1px solid #ccc; display: flex; align-items: center; justify-content: center; flex: none; }
.check.on { background: #4a86ec; border-color: #4a86ec; }
.appearance { height: 159px; flex: none; font-size: 12.500px; padding-top: 10px; }
.ctl-for { padding-left: 12px; line-height: 20px; }
.tight { margin-top: 5px; padding-left: 16px; }
.second-sel { margin-top: 6px; }
.bg-row { margin-top: 8px; padding-left: 31px; }
.lb-state { flex: 0 0 89px; padding-bottom: 2px; }
.lb-bg { flex: 0 0 95px; }
.obj-head {
  height: 35px; flex: none; background: #fff; border-top: 2px solid #dfdfdf; border-bottom: 1px solid #e6e6e6;
  display: flex; align-items: center; padding-left: 11px; position: relative;
}
.obj-tabs { position: absolute; left: 224px; top: 0; display: flex; }
.otab { width: 34px; height: 33px; display: flex; justify-content: center; padding-top: 6px; }
.otab.active { border-bottom: 2px solid #3f7fe8; }
.objects {
  flex: 1; background: #f0f0f0; border-radius: 0 0 7px 0; padding: 5px 0 0 3px;
  display: grid; grid-template-columns: repeat(5, 52px); grid-auto-rows: 52px; gap: 8px;
}
.obj { background: #f6f6f6; position: relative; }
.obj svg { display: block; width: 52px; height: 52px; }
.obj.plain { background: #fbfbfb; }
.obj.clip { overflow: hidden; }
.obj.sel::after { content: ""; position: absolute; inset: -4px; border: 1px solid #a8c4e0; box-shadow: inset 0 0 0 3px #e6e6e6; pointer-events: none; }

.fr { fill: #eeeeee; stroke: #bdbdbd; stroke-width: 1.200; }
.fr.grad { fill: #d9dade; }
.fr.grad2 { fill: #e6e8ec; }
.hd { fill: #fafafa; stroke: #888; stroke-width: .8; }
.obj text { font-family: Inter, "Liberation Sans", sans-serif; }
.t-btn { font-size: 12.500px; fill: #5b9be8; text-anchor: middle; }
.t-lab { font-size: 12.500px; fill: #222; text-anchor: middle; }
.t-pick { text-anchor: middle; fill: #555; }
.f5 { font-size: 4.500px; fill: #bbb; }
.f7 { font-size: 6.500px; }
.f8 { font-size: 7px; fill: #111; }
.t-tab { font-size: 8.500px; fill: #444; }
.t-tab.big { font-size: 9.500px; fill: #666; }
.t-ab { font-size: 15px; text-anchor: middle; }
.t-ab.w { fill: #fff; }
.t-ab.b { fill: #4a86e8; }
.t-lorem { font-size: 6.800px; fill: #444; }
.t-date { font-size: 6px; fill: #777; white-space: pre; }
.t-date.hi { fill: #111; font-size: 6.800px; font-weight: 600; }
.t-date.d6 { font-size: 5px; fill: #aaa; }
.t-date.d5 { font-size: 4.500px; fill: #ccc; }
```
